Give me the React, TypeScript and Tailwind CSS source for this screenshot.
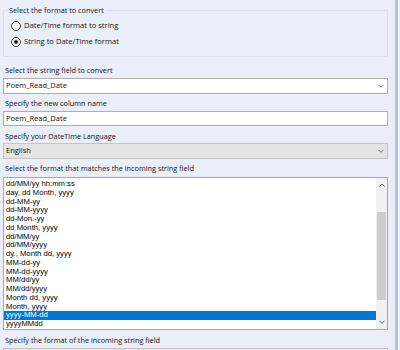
import React from "react";

const items = [
  "dd/MM/yy hh:mm:ss",
  "day, dd Month, yyyy",
  "dd-MM-yy",
  "dd-MM-yyyy",
  "dd-Mon.-yy",
  "dd Month, yyyy",
  "dd/MM/yy",
  "dd/MM/yyyy",
  "dy., Month dd, yyyy",
  "MM-dd-yy",
  "MM-dd-yyyy",
  "MM/dd/yy",
  "MM/dd/yyyy",
  "Month dd, yyyy",
  "Month, yyyy",
  "yyyy-MM-dd",
  "yyyyMMdd",
];

const labelFont = { fontFamily: '"Open Sans", "Noto Sans", sans-serif' };
const listFont = { fontFamily: '"Liberation Sans", Arial, sans-serif' };

function Chevron({ up = false, color = "#7a7a7a" }: { up?: boolean; color?: string }) {
  return (
    <svg width="6" height="4" viewBox="0 0 6 4" className="block">
      <path
        d={up ? "M0.5 3.5 L3 1 L5.5 3.5" : "M0.5 0.8 L3 3.3 L5.5 0.8"}
        fill="none"
        stroke={color}
        strokeWidth="1"
      />
    </svg>
  );
}

function Radio({ checked }: { checked?: boolean }) {
  return (
    <div className="w-[10px] h-[10px] shrink-0 rounded-full border border-[#3a3a3a] bg-white flex items-center justify-center">
      {checked && <div className="w-[4px] h-[4px] rounded-full bg-[#2a2a2a]" />}
    </div>
  );
}

function Label({ children, mt }: { children: React.ReactNode; mt: string }) {
  return (
    <div
      className={`h-[12px] shrink-0 flex items-center pl-[2px] text-[7.3px] text-[#141414] whitespace-nowrap ${mt}`}
      style={labelFont}
    >
      {children}
    </div>
  );
}

export default function App() {
  return (
    <div className="w-[400px] h-[350px] bg-[#eaeef9] flex overflow-hidden">
      <div className="w-[395px] shrink-0 flex flex-col pl-[3px] pr-[7px] overflow-hidden">
        {/* Group box */}
        <div className="relative shrink-0 mt-[10px] h-[47px] border border-[#dbe0ec] flex flex-col pt-[10px] gap-[6px] pl-[7px]">
          <div
            className="absolute left-[3px] top-[-7px] px-[2px] bg-[#eaeef9] text-[7.3px] text-[#141414] leading-[12px] whitespace-nowrap"
            style={labelFont}
          >
            Select the format to convert
          </div>
          <div className="flex items-center gap-[3px] h-[10px]">
            <Radio />
            <span className="text-[7.6px] text-[#141414] whitespace-nowrap" style={labelFont}>
              Date/Time format to string
            </span>
          </div>
          <div className="flex items-center gap-[3px] h-[10px]">
            <Radio checked />
            <span className="text-[7.6px] text-[#141414] whitespace-nowrap" style={labelFont}>
              String to Date/Time format
            </span>
          </div>
        </div>

        <Label mt="mt-[7px]">Select the string field to convert</Label>
        <div className="shrink-0 mt-[2px] h-[16px] border border-[#adadad] bg-white flex items-center justify-between pl-[2px] pr-[3px]">
          <span className="text-[7.5px] text-[#111]" style={labelFont}>
            Poem_Read_Date
          </span>
          <Chevron />
        </div>

        <Label mt="mt-[3px]">Specify the new column name</Label>
        <div className="shrink-0 mt-[2px] h-[15px] border border-[#adadad] bg-white flex items-center pl-[2px]">
          <span className="text-[7.5px] text-[#111]" style={labelFont}>
            Poem_Read_Date
          </span>
        </div>

        <Label mt="mt-[4px]">Specify your DateTime Language</Label>
        <div className="shrink-0 mt-[1px] h-[16px] border border-[#c4c4c4] bg-[#e3e3e3] flex items-center justify-between pl-[2px] pr-[3px]">
          <span className="text-[7.5px] text-[#111]" style={labelFont}>
            English
          </span>
          <Chevron />
        </div>

        <Label mt="mt-[3px]">Select the format that matches the incoming string field</Label>
        <div className="shrink-0 mt-[3px] h-[153px] border border-[#a8a8a8] bg-white flex overflow-hidden">
          <div className="flex-1 flex flex-col pt-[2px] overflow-hidden">
            {items.map((it, i) => {
              const sel = it === "yyyy-MM-dd";
              return (
                <div
                  key={i}
                  className={`h-[8.75px] shrink-0 leading-[8.75px] pl-[2px] text-[7.7px] whitespace-nowrap ${
                    sel ? "bg-[#0078d7] text-white" : "text-black"
                  }`}
                  style={listFont}
                >
                  {it}
                </div>
              );
            })}
          </div>
          <div className="w-[11px] shrink-0 bg-[#f0f0f0] flex flex-col items-center">
            <div className="h-[14px] shrink-0 flex items-center justify-center">
              <Chevron up color="#606060" />
            </div>
            <div className="shrink-0 mt-[20px] h-[88px] w-[9px] bg-[#cdcdcd]" />
            <div className="flex-1" />
            <div className="h-[14px] shrink-0 flex items-center justify-center">
              <Chevron color="#606060" />
            </div>
          </div>
        </div>

        <Label mt="mt-[4px]">Specify the format of the incoming string field</Label>
        <div className="shrink-0 mt-[2px] h-[16px] border border-[#c4c4c4] bg-[#e3e3e3]" />
      </div>
      <div className="w-[3px] shrink-0 bg-[#b4c4e6]" />
      <div className="w-[2px] shrink-0 bg-[#eef1f9]" />
    </div>
  );
}
